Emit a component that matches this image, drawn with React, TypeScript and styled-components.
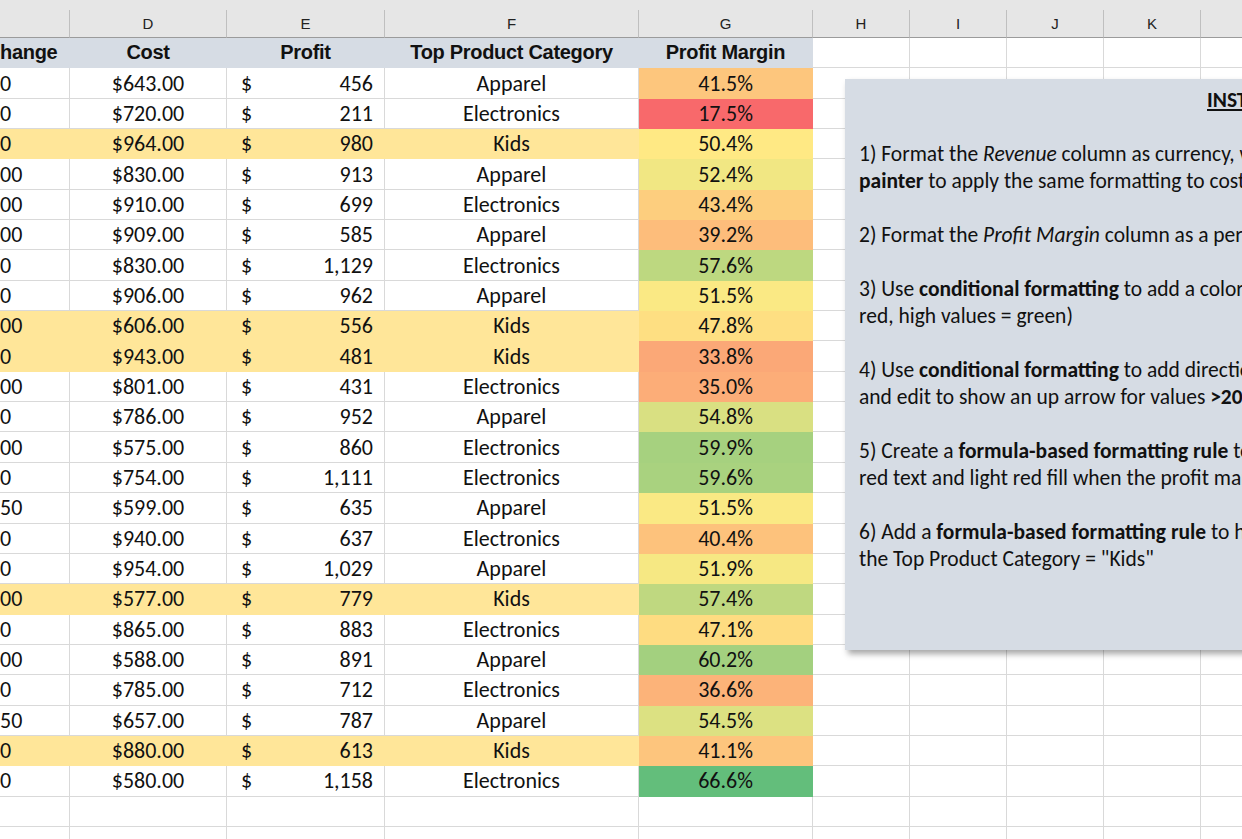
import React from "react";
import styled, { createGlobalStyle } from "styled-components";

const Global = createGlobalStyle`
  html, body { margin: 0; padding: 0; background: #fff; overflow: hidden; }
  body { font-family: Carlito, Lato, "Open Sans", sans-serif; }
`;

const COLS = [70, 157, 158, 254, 174, 97, 97, 97, 97, 120];
const LETTERS = ["", "D", "E", "F", "G", "H", "I", "J", "K", ""];
const tmpl = COLS.map((c) => c + "px").join(" ");

const Page = styled.div`
  position: relative;
  width: 1242px;
  height: 839px;
  overflow: hidden;
  background: #fff;
`;
const TopStrip = styled.div`
  height: 10px;
  background: #e6e6e6;
`;
const Grid = styled.div`
  display: grid;
  grid-template-columns: ${tmpl};
  grid-auto-rows: 30.35px;
`;
const ColHead = styled.div`
  height: 28px;
  background: #e6e6e6;
  border-right: 1px solid #bfbfbf;
  border-bottom: 1px solid #9b9b9b;
  box-sizing: border-box;
  display: flex;
  align-items: center;
  justify-content: center;
  font-family: "Liberation Sans", Arial, sans-serif;
  font-size: 15px;
  color: #222;
`;
const HeadRow = styled.div`
  display: grid;
  grid-template-columns: ${tmpl};
`;
const Cell = styled.div<{ $bg?: string; $align?: string; $bold?: boolean }>`
  box-sizing: border-box;
  border-right: 1px solid ${(p) => (p.$bg && p.$bg !== "#fff" ? "transparent" : "#d9d9d9")};
  border-bottom: 1px solid ${(p) => (p.$bg && p.$bg !== "#fff" ? "transparent" : "#d9d9d9")};
  background: ${(p) => p.$bg || "#fff"};
  display: flex;
  align-items: center;
  justify-content: ${(p) => p.$align || "center"};
  font-family: ${(p) => (p.$bold ? '"Liberation Sans Narrow", "Liberation Sans", Arial, sans-serif' : 'Carlito, "Open Sans", sans-serif')};
  font-weight: ${(p) => (p.$bold ? 700 : 400)};
  font-size: ${(p) => (p.$bold ? "20px" : "22px")};
  letter-spacing: ${(p) => (p.$bold ? "-0.3px" : "0")};
  color: #111;
  white-space: nowrap;
  overflow: hidden;
  padding: 0 12px;
`;
const Acct = styled(Cell)`
  justify-content: space-between;
  padding: 0 11px 0 14px;
`;
const Box = styled.div`
  position: absolute;
  left: 845px;
  top: 79px;
  width: 900px;
  height: 571px;
  background: #d6dce4;
  box-shadow: 3px 4px 6px rgba(0, 0, 0, 0.35);
  padding: 8px 14px;
  box-sizing: border-box;
  font-family: Carlito, "Open Sans", sans-serif;
  font-size: 21.5px;
  color: #111;
  line-height: 27px;
`;
const Title = styled.div`
  margin-left: 348px;
  font-weight: 700;
  text-decoration: underline;
  margin-bottom: 27px;
`;
const Para = styled.p`
  margin: 0 0 27px;
  white-space: nowrap;
`;

type Row = [string, string, string, string, number];
const rows: Row[] = [
  ["0", "$643.00", "456", "Apparel", 41.5],
  ["0", "$720.00", "211", "Electronics", 17.5],
  ["0", "$964.00", "980", "Kids", 50.4],
  ["00", "$830.00", "913", "Apparel", 52.4],
  ["00", "$910.00", "699", "Electronics", 43.4],
  ["00", "$909.00", "585", "Apparel", 39.2],
  ["0", "$830.00", "1,129", "Electronics", 57.6],
  ["0", "$906.00", "962", "Apparel", 51.5],
  ["00", "$606.00", "556", "Kids", 47.8],
  ["0", "$943.00", "481", "Kids", 33.8],
  ["00", "$801.00", "431", "Electronics", 35.0],
  ["0", "$786.00", "952", "Apparel", 54.8],
  ["00", "$575.00", "860", "Electronics", 59.9],
  ["0", "$754.00", "1,111", "Electronics", 59.6],
  ["50", "$599.00", "635", "Apparel", 51.5],
  ["0", "$940.00", "637", "Electronics", 40.4],
  ["0", "$954.00", "1,029", "Apparel", 51.9],
  ["00", "$577.00", "779", "Kids", 57.4],
  ["0", "$865.00", "883", "Electronics", 47.1],
  ["00", "$588.00", "891", "Apparel", 60.2],
  ["0", "$785.00", "712", "Electronics", 36.6],
  ["50", "$657.00", "787", "Apparel", 54.5],
  ["0", "$880.00", "613", "Kids", 41.1],
  ["0", "$580.00", "1,158", "Electronics", 66.6],
];

const vals = rows.map((r) => r[4]);
const sorted = [...vals].sort((a, b) => a - b);
const mn = sorted[0], mx = sorted[sorted.length - 1];
const med = (sorted[11] + sorted[12]) / 2;
const mix = (a: number[], b: number[], t: number) =>
  "rgb(" + a.map((v, i) => Math.round(v + (b[i] - v) * t)).join(",") + ")";
const RED = [248, 105, 107], YEL = [255, 235, 132], GRN = [99, 190, 123];
const scale = (v: number) =>
  v <= med ? mix(RED, YEL, (v - mn) / (med - mn)) : mix(YEL, GRN, (v - med) / (mx - med));

const KIDS = "#ffe699";

export default function App() {
  return (
    <Page>
      <Global />
      <TopStrip />
      <HeadRow>
        {LETTERS.map((l, i) => (
          <ColHead key={i}>{l}</ColHead>
        ))}
      </HeadRow>
      <Grid>
        <Cell $bg="#d6dce4" $bold $align="flex-start" style={{ paddingLeft: 0 }}>hange</Cell>
        <Cell $bg="#d6dce4" $bold>Cost</Cell>
        <Cell $bg="#d6dce4" $bold>Profit</Cell>
        <Cell $bg="#d6dce4" $bold>Top Product Category</Cell>
        <Cell $bg="#d6dce4" $bold>Profit Margin</Cell>
        {Array.from({ length: 5 }).map((_, i) => <Cell key={"h" + i} />)}
        {rows.map((r, i) => {
          const bg = r[3] === "Kids" ? KIDS : "#fff";
          return (
            <React.Fragment key={i}>
              <Cell $bg={bg} $align="flex-start" style={{ paddingLeft: 0 }}>{r[0]}</Cell>
              <Cell $bg={bg}>{r[1]}</Cell>
              <Acct $bg={bg}><span>$</span><span>{r[2]}</span></Acct>
              <Cell $bg={bg}>{r[3]}</Cell>
              <Cell $bg={scale(r[4])}>{r[4].toFixed(1)}%</Cell>
              {Array.from({ length: 5 }).map((_, j) => <Cell key={j} />)}
            </React.Fragment>
          );
        })}
        {Array.from({ length: 20 }).map((_, i) => <Cell key={"e" + i} />)}
      </Grid>
      <Box>
        <Title>INSTRUCTIONS</Title>
        <Para>1) Format the <i>Revenue</i> column as currency, with no decimals, then use the <b>format</b><br /><b>painter</b> to apply the same formatting to cost and profit columns</Para>
        <Para>2) Format the <i>Profit Margin</i> column as a percentage with one decimal</Para>
        <Para>3) Use <b>conditional formatting</b> to add a color scale to Profit Margin (low values =<br />red, high values = green)</Para>
        <Para>4) Use <b>conditional formatting</b> to add directional icons to the Change column,<br />and edit to show an up arrow for values <b>&gt;20%</b></Para>
        <Para>5) Create a <b>formula-based formatting rule</b> to apply bold formatting with dark<br />red text and light red fill when the profit margin is below 20%</Para>
        <Para>6) Add a <b>formula-based formatting rule</b> to highlight the entire row when<br />the Top Product Category = "Kids"</Para>
      </Box>
    </Page>
  );
}
